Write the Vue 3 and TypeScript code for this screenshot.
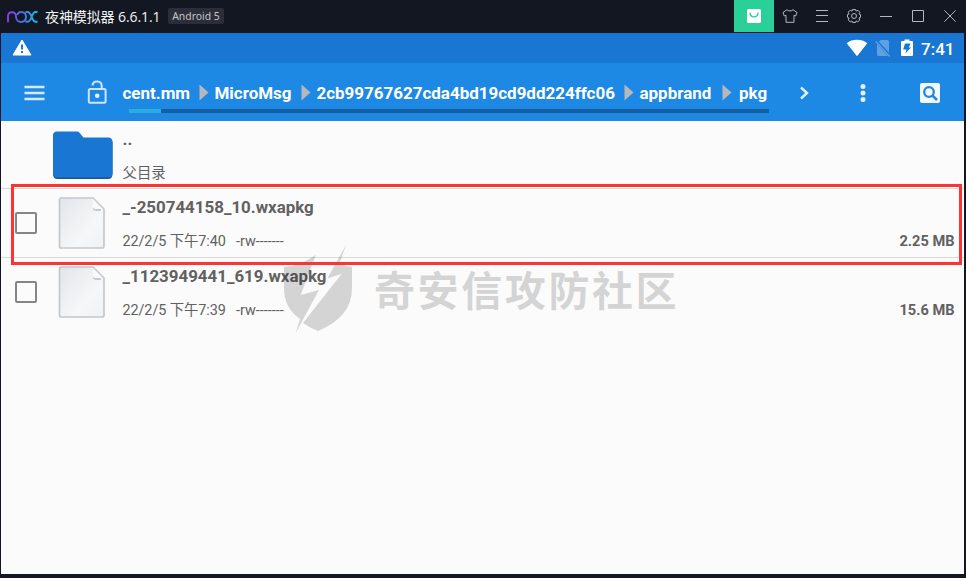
<script setup lang="ts">
interface Crumb {
  label: string
  width: number
}

interface FileEntry {
  name: string
  date: string
  mode: string
  size: string
}

const crumbs: Crumb[] = [
  { label: 'cent.mm', width: 76 },
  { label: 'MicroMsg', width: 86 },
  { label: '2cb99767627cda4bd19cd9dd224ffc06', width: 307 },
  { label: 'appbrand', width: 82 },
  { label: 'pkg', width: 60 },
]

const files: FileEntry[] = [
  { name: '_-250744158_10.wxapkg', date: '22/2/5 下午7:40', mode: '-rw-------', size: '2.25 MB' },
  { name: '_1123949441_619.wxapkg', date: '22/2/5 下午7:39', mode: '-rw-------', size: '15.6 MB' },
]
</script>

<template>
  <div class="window">
    <header class="titlebar">
      <svg class="nox" viewBox="0 0 32 14" width="32" height="14">
        <defs>
          <linearGradient id="noxGrad" gradientUnits="userSpaceOnUse" x1="0" y1="0" x2="31" y2="0">
            <stop offset="0" stop-color="#8a3be0" />
            <stop offset="0.5" stop-color="#4c6ee6" />
            <stop offset="1" stop-color="#12c4ea" />
          </linearGradient>
        </defs>
        <g fill="none" stroke="url(#noxGrad)" stroke-width="1.9">
          <path d="M1 12.300V6.500C1 .8 9 .8 9 6.500C9 13.800 19 13.800 19 7C19 .8 11.500 .8 10.300 5" />
          <path d="M18.500 2H20.500C25 2 24.500 11.800 28.500 11.800H30.500M30.500 2H28.500C24.500 2 25 11.800 20.500 11.800H18.500" />
        </g>
      </svg>
      <span class="app-name">夜神模拟器 6.6.1.1</span>
      <span class="badge">Android 5</span>
      <div class="controls">
        <span class="control store">
          <svg viewBox="0 0 14 14" width="14" height="14">
            <rect width="14" height="14" rx="1.500" fill="#fff" />
            <path d="M3 3.500C3 9.300 11 9.300 11 3.500" fill="none" stroke="#2bcf98" stroke-width="1.300" />
          </svg>
        </span>
        <span class="control">
          <svg class="line" viewBox="0 0 16 14" width="16" height="14">
            <path d="M5 .7L1 3.500L2.300 7L4 6.300V13.300H12V6.300L13.700 7L15 3.500L11 .7C10 2.300 6 2.300 5 .7Z" />
          </svg>
        </span>
        <span class="control">
          <svg class="line" viewBox="0 0 12 12" width="12" height="12"><path d="M0 .5H12M0 5.500H12M0 11.500H12" /></svg>
        </span>
        <span class="control">
          <svg class="line" viewBox="0 0 16 16" width="16" height="16">
            <path d="M6.500 1.500H9.500L10 3.200L12 2.300L13.900 4.300L12.900 6L14.500 6.600V9.400L12.900 10L13.800 12L11.800 13.800L10 12.900L9.500 14.500H6.500L6 12.900L4.200 13.800L2.200 12L3.100 10L1.500 9.400V6.600L3.100 6L2.200 4.200L4.200 2.200L6 3.200Z" />
            <circle cx="8" cy="8" r="2.500" />
          </svg>
        </span>
        <span class="control">
          <svg class="line" viewBox="0 0 12 12" width="12" height="12"><path d="M0 6.500H12" /></svg>
        </span>
        <span class="control">
          <svg class="line" viewBox="0 0 12 12" width="12" height="12"><path d="M.5 .5H11.500V11.500H.5Z" /></svg>
        </span>
        <span class="control">
          <svg class="line" viewBox="0 0 12 12" width="12" height="12"><path d="M.3 .3L11.700 11.700M11.700 .3L.3 11.700" /></svg>
        </span>
      </div>
    </header>

    <main class="screen">
      <div class="statusbar">
        <svg class="warning" viewBox="0 0 20 17" width="20" height="17">
          <path d="M10 1L19 16H1Z" fill="#fff" stroke="#fff" stroke-width="1" stroke-linejoin="round" />
          <path d="M10 5.500V10.500M10 12V14" stroke="#1976d2" stroke-width="2" />
        </svg>
        <div class="status-icons">
          <svg viewBox="0 0 22 18" width="22" height="18">
            <path d="M.7 4.200C6 -.3 16 -.3 21.300 4.200L11 17.300Z" fill="#fff" />
          </svg>
          <svg class="sim" viewBox="0 0 16 18" width="16" height="18">
            <path d="M5.500 1H12.500Q14 1 14 2.500V13.500L4 3Z M2 5L13 17H3.500Q2 17 2 15.500Z" fill="#5ea0e0" />
            <path d="M.7 2.500L14.900 17.500" stroke="#5ea0e0" stroke-width="1.400" />
          </svg>
          <svg class="battery" viewBox="0 0 12 18" width="12" height="18">
            <path d="M3.500 .5H8.500V2H11Q12 2 12 3V16Q12 17 11 17H1Q0 17 0 16V3Q0 2 1 2H3.500Z" fill="#fff" />
            <path d="M4 4.500H9.500L7.800 8.500H10L4.300 14.500L5.500 10.500H2.200Z" fill="#1976d2" />
          </svg>
          <span class="clock">7:41</span>
        </div>
      </div>

      <div class="toolbar">
        <svg class="menu" viewBox="0 0 22 16" width="22" height="16">
          <path d="M.5 2H20.500M.5 8H20.500M.5 14H20.500" stroke="#d6e9fb" stroke-width="2.600" />
        </svg>
        <svg class="lock" viewBox="0 0 20 24" width="20" height="24">
          <rect x="1.800" y="9" width="16.800" height="13.700" rx="1.500" fill="none" stroke="#cfe4fa" stroke-width="2" />
          <path d="M5.500 5.500C6 -.2 14.700 .2 14.700 6V9" fill="none" stroke="#cfe4fa" stroke-width="2" />
          <circle cx="10.200" cy="15.700" r="2.300" fill="#e6f2fd" />
        </svg>
        <nav class="path">
          <div class="crumbs">
            <template v-for="(crumb, i) in crumbs" :key="crumb.label">
              <svg v-if="i > 0" class="arrow" viewBox="0 0 10 17" width="10" height="17">
                <path d="M.5 .5L9.500 8.500L.5 16.500Z" fill="#b6b8bb" />
              </svg>
              <span class="crumb" :style="{ width: crumb.width + 'px' }">{{ crumb.label }}</span>
            </template>
            <svg viewBox="0 0 10 14" width="10" height="14">
              <path d="M2 1.500L8 7L2 12.500" fill="none" stroke="#e3f0fc" stroke-width="2.400" />
            </svg>
          </div>
          <div class="progress"><div class="progress-fill"></div></div>
        </nav>
        <svg class="more" viewBox="0 0 6 18" width="6" height="18">
          <g fill="#e3f0fc"><circle cx="3" cy="2.600" r="2.500" /><circle cx="3" cy="9" r="2.500" /><circle cx="3" cy="15.400" r="2.500" /></g>
        </svg>
        <svg class="search" viewBox="0 0 20 20" width="20" height="20">
          <rect width="20" height="20" rx="2" fill="#f2f8fe" />
          <circle cx="9" cy="9" r="4.800" fill="none" stroke="#1e88e5" stroke-width="2.300" />
          <path d="M12.300 12.300L17 17" stroke="#1e88e5" stroke-width="2.600" />
        </svg>
      </div>

      <section class="list">
        <div class="row parent">
          <svg class="folder" viewBox="0 0 62 51" width="62" height="51">
            <path d="M5 3H25L31 9.500H56Q60.500 9.500 60.500 14V45Q60.500 50 56 50H5.500Q1 50 1 45V7.500Q1 3 5 3Z" fill="#1b5593" />
            <path d="M5 2.500H25Q26.500 2.500 27.500 3.700L31.500 8.500H56Q60.500 8.500 60.500 13V44Q60.500 48.500 56 48.500H5.500Q1 48.500 1 44V7Q1 2.500 5 2.500Z" fill="#1976d2" />
          </svg>
          <div class="info">
            <div class="name">..</div>
            <div class="meta">父目录</div>
          </div>
        </div>
        <div v-for="file in files" :key="file.name" class="row">
          <span class="checkbox"></span>
          <svg class="doc" viewBox="0 0 48 54" width="48" height="54">
            <defs>
              <linearGradient id="paper" x1="0" y1="0" x2="1" y2="1">
                <stop offset="0" stop-color="#e2e5e9" />
                <stop offset="0.650" stop-color="#f6f7f8" />
                <stop offset="1" stop-color="#eff1f2" />
              </linearGradient>
            </defs>
            <path d="M3 2H35L46 13V50Q46 52 44 52H3Q1.500 52 1.500 50V3.500Q1.500 2 3 2Z" fill="url(#paper)" stroke="#c4c8cb" stroke-width="1.700" />
            <path d="M35 3V11.500Q35 13.500 37 13.500H45Z" fill="#fafafa" />
            <path d="M35.500 12.500Q36 14 38 14H43" fill="none" stroke="#c6c9cc" stroke-width="1.900" />
          </svg>
          <div class="info">
            <div class="name">{{ file.name }}</div>
            <div class="meta"><span class="date">{{ file.date }}</span><span>{{ file.mode }}</span></div>
          </div>
          <span class="size">{{ file.size }}</span>
        </div>
      </section>
    </main>

    <div class="watermark">
      <svg viewBox="0 0 72 90" width="72" height="90">
        <path d="M2 22Q18 21 33.700 10L18.700 50L37 45L13.700 88L18 74Q2 63 2 43Z" />
        <path d="M64 0L45.300 33.500L59.500 29L21 78Q28 83 36 86Q70 72 70 43V22Q63 21 57.500 18.500Z" />
      </svg>
      <span>奇安信攻防社区</span>
    </div>
    <div class="highlight"></div>
  </div>
</template>

<style>
body {
  margin: 0;
  overflow: hidden;
}
</style>

<style scoped>
.window {
  position: relative;
  box-sizing: border-box;
  width: 966px;
  height: 578px;
  padding: 0 2px 4px 1px;
  background: #131722;
  font-family: Roboto, "Noto Sans CJK SC", sans-serif;
}
.titlebar {
  display: flex;
  align-items: center;
  height: 33px;
  padding-left: 6px;
  color: #f2f3f5;
}
.nox {
  flex: none;
  margin-right: 6px;
}
.app-name {
  width: 123px;
  white-space: nowrap;
  letter-spacing: -0.1px;
  font: 14px/32px "Open Sans", "Noto Sans CJK SC", sans-serif;
}
.badge {
  width: 56px;
  height: 16px;
  margin-top: -1px;
  border-radius: 2px;
  background: #2b2e38;
  color: #c3c5c9;
  text-align: center;
  white-space: nowrap;
  font: 10.4px/16px "Noto Sans", sans-serif;
}
.controls {
  display: flex;
  align-self: flex-start;
  margin: 0 -2px 0 auto;
}
.control {
  display: flex;
  align-items: center;
  justify-content: center;
  width: 32px;
  height: 32px;
}
.store {
  width: 40px;
  background: #2bcf98;
}
.line {
  fill: none;
  stroke: #b4b6bb;
  stroke-width: 1;
}
.screen {
  height: 541px;
  background: #fbfbfb;
}
.statusbar {
  display: flex;
  align-items: center;
  height: 30px;
  padding: 0 10px 0 11px;
  background: #1976d2;
}
.warning {
  margin-top: -1px;
}
.status-icons {
  display: flex;
  align-items: center;
  margin-left: auto;
}
.sim {
  margin-left: 7px;
}
.battery {
  margin: 0 8px 0 10px;
}
.clock {
  width: 33px;
  color: #fff;
  font-size: 17px;
  font-weight: 500;
  line-height: 20px;
  padding-top: 1px;
  white-space: nowrap;
}
.toolbar {
  display: flex;
  align-items: center;
  height: 58px;
  padding-left: 23px;
  background: #1e88e5;
}
.menu,
.more,
.search {
  position: relative;
  top: 0.5px;
}
.lock {
  margin: -1px 15.5px 0 41px;
}
.path {
  width: 690.5px;
  height: 58px;
}
.crumbs {
  display: flex;
  align-items: center;
  height: 45px;
  margin-top: 7px;
}
.crumb {
  flex: none;
  color: #fff;
  font-size: 17px;
  font-weight: 700;
  line-height: 20px;
  letter-spacing: -0.02px;
  white-space: nowrap;
}
.arrow {
  flex: none;
  margin-right: 6px;
}
.crumb:nth-last-child(2) {
  padding-left: 1.500px;
}
.progress {
  width: 640px;
  height: 4px;
  margin: -6px 0 0 6.5px;
  background: #155fa0;
}
.progress-fill {
  width: 32px;
  height: 4px;
  background: #2bacdf;
}
.more {
  margin-left: 46.5px;
}
.search {
  margin-left: 54.5px;
}
.row {
  display: flex;
  box-sizing: border-box;
  height: 69px;
  padding-left: 14px;
  border-bottom: 1px solid #d9d9d9;
  color: #616161;
}
.row:last-child {
  border-bottom: 0;
}
.parent {
  height: 68px;
  padding-left: 51px;
}
.folder {
  margin: 8px 8.5px 0 0;
}
.checkbox {
  box-sizing: border-box;
  width: 22px;
  height: 22px;
  margin: 23px 21px 0 0;
  border: 2px solid #858585;
  border-radius: 2px;
}
.doc {
  margin: 7px 16.5px 0 0;
}
.info {
  flex: 1;
}
.name {
  height: 35px;
  font-size: 16.900px;
  font-weight: 700;
  line-height: 36px;
  white-space: nowrap;
}
.meta {
  font-size: 14.400px;
  line-height: 36px;
  white-space: nowrap;
}
.date {
  display: inline-block;
  width: 113.5px;
  letter-spacing: -0.080px;
}
.size {
  padding: 42px 9.5px 0 0;
  font-size: 14.600px;
  font-weight: 700;
  line-height: 20px;
}
.watermark {
  position: absolute;
  left: 282px;
  top: 245px;
  display: flex;
  align-items: center;
  gap: 20px;
  color: #000;
  opacity: 0.150;
  font: 700 41px/86px "Noto Sans CJK SC", sans-serif;
  letter-spacing: 2.600px;
  white-space: nowrap;
}
.watermark span {
  margin-top: -4px;
}
.highlight {
  position: absolute;
  box-sizing: border-box;
  left: 11px;
  top: 184px;
  width: 951px;
  height: 81px;
  border: 3px solid #fc3434;
}
</style>
